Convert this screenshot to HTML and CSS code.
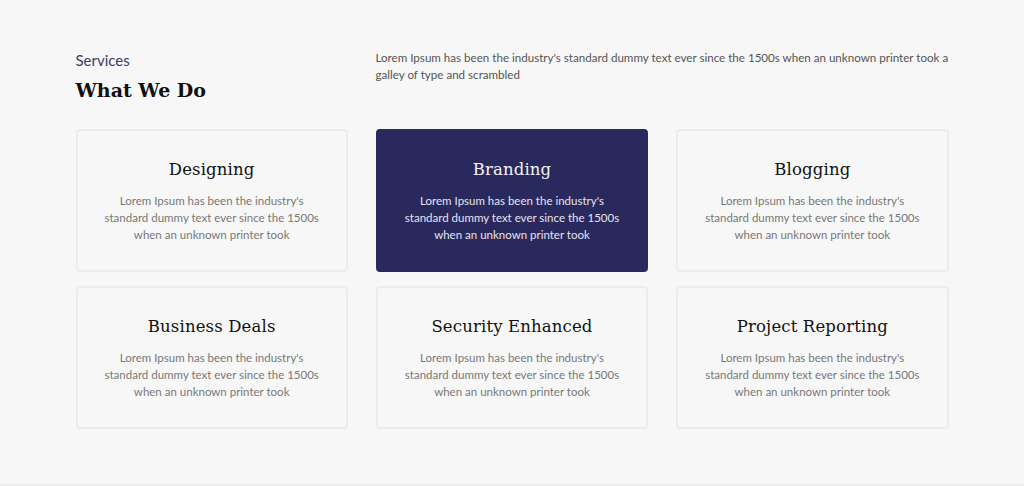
FILE: index.html
```html
<!DOCTYPE html>
<html>
<head>
<meta charset="utf-8">
<link rel="stylesheet" href="styles.css">
</head>
<body>
<section class="services">
  <div class="container">
    <div class="head">
      <div class="head-title">
        <div class="eyebrow">Services</div>
        <h2 class="title">What We Do</h2>
      </div>
      <p class="intro">Lorem Ipsum has been the industry's standard dummy text ever since the 1500s when an unknown printer took a<br>galley of type and scrambled</p>
    </div>
    <div class="grid">
      <div class="card">
        <h3 class="card-title">Designing</h3>
        <p class="card-text">Lorem Ipsum has been the industry's<br>standard dummy text ever since the 1500s<br>when an unknown printer took</p>
      </div>
      <div class="card card-active">
        <h3 class="card-title">Branding</h3>
        <p class="card-text">Lorem Ipsum has been the industry's<br>standard dummy text ever since the 1500s<br>when an unknown printer took</p>
      </div>
      <div class="card">
        <h3 class="card-title">Blogging</h3>
        <p class="card-text">Lorem Ipsum has been the industry's<br>standard dummy text ever since the 1500s<br>when an unknown printer took</p>
      </div>
      <div class="card">
        <h3 class="card-title">Business Deals</h3>
        <p class="card-text">Lorem Ipsum has been the industry's<br>standard dummy text ever since the 1500s<br>when an unknown printer took</p>
      </div>
      <div class="card">
        <h3 class="card-title">Security Enhanced</h3>
        <p class="card-text">Lorem Ipsum has been the industry's<br>standard dummy text ever since the 1500s<br>when an unknown printer took</p>
      </div>
      <div class="card">
        <h3 class="card-title">Project Reporting</h3>
        <p class="card-text">Lorem Ipsum has been the industry's<br>standard dummy text ever since the 1500s<br>when an unknown printer took</p>
      </div>
    </div>
  </div>
</section>
</body>
</html>
```
FILE: styles.css
```css
* { box-sizing: border-box; }
html, body { margin: 0; padding: 0; }
body {
  background: #f7f7f7;
  font-family: "Lato", "Open Sans", sans-serif;
  color: #555;
}
.services {
  height: 486px;
  border-bottom: 2px solid #ececec;
  padding-top: 50px;
}
.container {
  width: 873px;
  margin: 0 auto;
}
.head {
  display: grid;
  grid-template-columns: 272px 1fr;
  column-gap: 28px;
  margin-bottom: 25px;
}
.eyebrow {
  font-size: 15px;
  line-height: 20px;
  color: #3b3a68;
}
.title {
  margin: 6px 0 0;
  font-family: "DejaVu Serif", serif;
  font-weight: bold;
  font-size: 19px;
  line-height: 28px;
  color: #111;
}
.intro {
  margin: -1px 0 0;
  font-size: 11.6px;
  line-height: 17px;
  color: #555;
}
.grid {
  display: grid;
  grid-template-columns: repeat(3, 1fr);
  column-gap: 28px;
  row-gap: 14px;
}
.card {
  border: 2px solid #ececec;
  border-radius: 4px;
  padding: 27px 10px 27px;
  text-align: center;
  background: #f7f7f7;
}
.card-active {
  background: #2a295d;
  border-color: #2a295d;
}
.card-title {
  margin: 0;
  font-family: "DejaVu Serif", serif;
  font-weight: normal;
  font-size: 16.5px;
  line-height: 24px;
  letter-spacing: 0.15px;
  color: #111;
}
.card-text {
  margin: 10px 0 0;
  font-size: 11.5px;
  line-height: 17px;
  color: #777;
}
.card-active .card-title { color: #f2f2f2; }
.card-active .card-text { color: #e4e4ee; }
```
